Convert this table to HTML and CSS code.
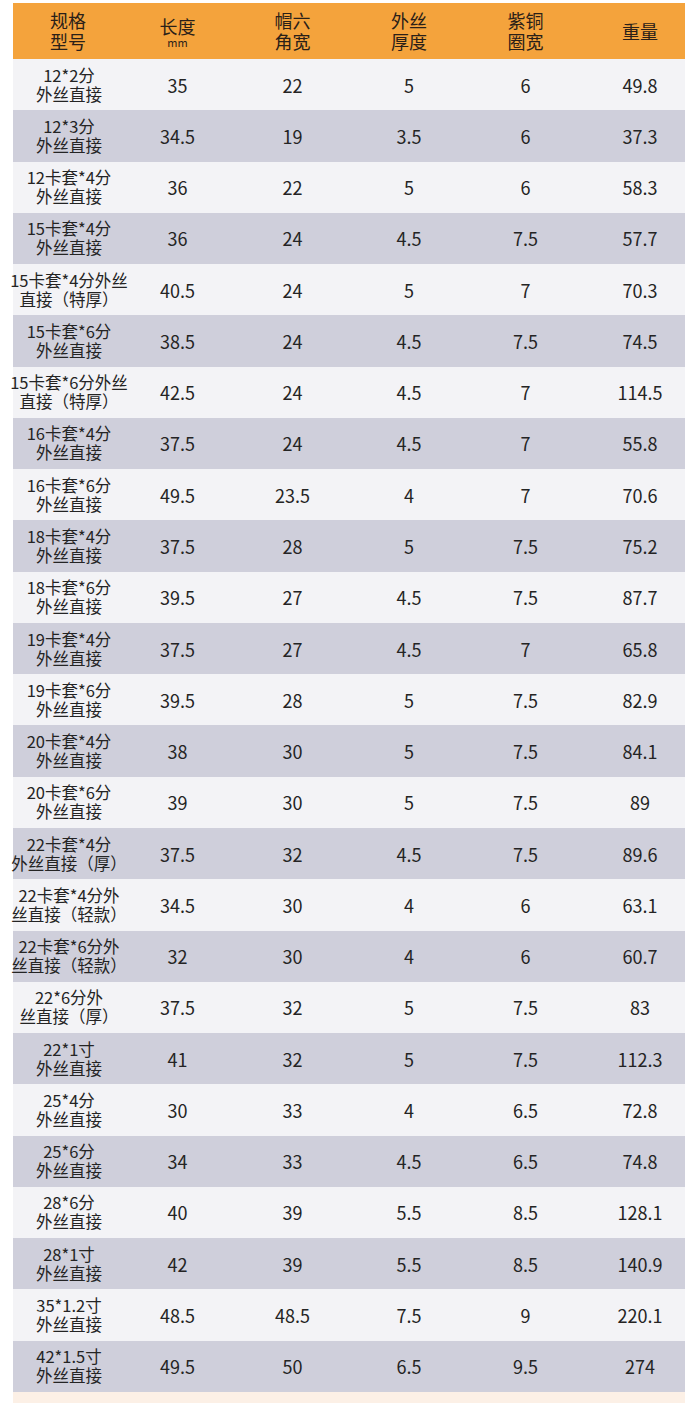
FILE: index.html
```html
<!DOCTYPE html>
<html lang="zh-CN">
<head>
<meta charset="utf-8">
<title>规格表</title>
<link rel="stylesheet" href="styles.css">
</head>
<body>
<div class="sheet">
  <div class="row head">
    <div class="c c1">规格<br>型号</div>
    <div class="c c2"><span class="two">长度<small>mm</small></span></div>
    <div class="c c3">帽六<br>角宽</div>
    <div class="c c4">外丝<br>厚度</div>
    <div class="c c5">紫铜<br>圈宽</div>
    <div class="c c6">重量</div>
  </div>
  <div class="row"><div class="c c1">12*2分<br>外丝直接</div><div class="c c2">35</div><div class="c c3">22</div><div class="c c4">5</div><div class="c c5">6</div><div class="c c6">49.8</div></div>
  <div class="row"><div class="c c1">12*3分<br>外丝直接</div><div class="c c2">34.5</div><div class="c c3">19</div><div class="c c4">3.5</div><div class="c c5">6</div><div class="c c6">37.3</div></div>
  <div class="row"><div class="c c1">12卡套*4分<br>外丝直接</div><div class="c c2">36</div><div class="c c3">22</div><div class="c c4">5</div><div class="c c5">6</div><div class="c c6">58.3</div></div>
  <div class="row"><div class="c c1">15卡套*4分<br>外丝直接</div><div class="c c2">36</div><div class="c c3">24</div><div class="c c4">4.5</div><div class="c c5">7.5</div><div class="c c6">57.7</div></div>
  <div class="row"><div class="c c1">15卡套*4分外丝<br>直接（特厚）</div><div class="c c2">40.5</div><div class="c c3">24</div><div class="c c4">5</div><div class="c c5">7</div><div class="c c6">70.3</div></div>
  <div class="row"><div class="c c1">15卡套*6分<br>外丝直接</div><div class="c c2">38.5</div><div class="c c3">24</div><div class="c c4">4.5</div><div class="c c5">7.5</div><div class="c c6">74.5</div></div>
  <div class="row"><div class="c c1">15卡套*6分外丝<br>直接（特厚）</div><div class="c c2">42.5</div><div class="c c3">24</div><div class="c c4">4.5</div><div class="c c5">7</div><div class="c c6">114.5</div></div>
  <div class="row"><div class="c c1">16卡套*4分<br>外丝直接</div><div class="c c2">37.5</div><div class="c c3">24</div><div class="c c4">4.5</div><div class="c c5">7</div><div class="c c6">55.8</div></div>
  <div class="row"><div class="c c1">16卡套*6分<br>外丝直接</div><div class="c c2">49.5</div><div class="c c3">23.5</div><div class="c c4">4</div><div class="c c5">7</div><div class="c c6">70.6</div></div>
  <div class="row"><div class="c c1">18卡套*4分<br>外丝直接</div><div class="c c2">37.5</div><div class="c c3">28</div><div class="c c4">5</div><div class="c c5">7.5</div><div class="c c6">75.2</div></div>
  <div class="row"><div class="c c1">18卡套*6分<br>外丝直接</div><div class="c c2">39.5</div><div class="c c3">27</div><div class="c c4">4.5</div><div class="c c5">7.5</div><div class="c c6">87.7</div></div>
  <div class="row"><div class="c c1">19卡套*4分<br>外丝直接</div><div class="c c2">37.5</div><div class="c c3">27</div><div class="c c4">4.5</div><div class="c c5">7</div><div class="c c6">65.8</div></div>
  <div class="row"><div class="c c1">19卡套*6分<br>外丝直接</div><div class="c c2">39.5</div><div class="c c3">28</div><div class="c c4">5</div><div class="c c5">7.5</div><div class="c c6">82.9</div></div>
  <div class="row"><div class="c c1">20卡套*4分<br>外丝直接</div><div class="c c2">38</div><div class="c c3">30</div><div class="c c4">5</div><div class="c c5">7.5</div><div class="c c6">84.1</div></div>
  <div class="row"><div class="c c1">20卡套*6分<br>外丝直接</div><div class="c c2">39</div><div class="c c3">30</div><div class="c c4">5</div><div class="c c5">7.5</div><div class="c c6">89</div></div>
  <div class="row"><div class="c c1">22卡套*4分<br>外丝直接（厚）</div><div class="c c2">37.5</div><div class="c c3">32</div><div class="c c4">4.5</div><div class="c c5">7.5</div><div class="c c6">89.6</div></div>
  <div class="row"><div class="c c1">22卡套*4分外<br>丝直接（轻款）</div><div class="c c2">34.5</div><div class="c c3">30</div><div class="c c4">4</div><div class="c c5">6</div><div class="c c6">63.1</div></div>
  <div class="row"><div class="c c1">22卡套*6分外<br>丝直接（轻款）</div><div class="c c2">32</div><div class="c c3">30</div><div class="c c4">4</div><div class="c c5">6</div><div class="c c6">60.7</div></div>
  <div class="row"><div class="c c1">22*6分外<br>丝直接（厚）</div><div class="c c2">37.5</div><div class="c c3">32</div><div class="c c4">5</div><div class="c c5">7.5</div><div class="c c6">83</div></div>
  <div class="row"><div class="c c1">22*1寸<br>外丝直接</div><div class="c c2">41</div><div class="c c3">32</div><div class="c c4">5</div><div class="c c5">7.5</div><div class="c c6">112.3</div></div>
  <div class="row"><div class="c c1">25*4分<br>外丝直接</div><div class="c c2">30</div><div class="c c3">33</div><div class="c c4">4</div><div class="c c5">6.5</div><div class="c c6">72.8</div></div>
  <div class="row"><div class="c c1">25*6分<br>外丝直接</div><div class="c c2">34</div><div class="c c3">33</div><div class="c c4">4.5</div><div class="c c5">6.5</div><div class="c c6">74.8</div></div>
  <div class="row"><div class="c c1">28*6分<br>外丝直接</div><div class="c c2">40</div><div class="c c3">39</div><div class="c c4">5.5</div><div class="c c5">8.5</div><div class="c c6">128.1</div></div>
  <div class="row"><div class="c c1">28*1寸<br>外丝直接</div><div class="c c2">42</div><div class="c c3">39</div><div class="c c4">5.5</div><div class="c c5">8.5</div><div class="c c6">140.9</div></div>
  <div class="row"><div class="c c1">35*1.2寸<br>外丝直接</div><div class="c c2">48.5</div><div class="c c3">48.5</div><div class="c c4">7.5</div><div class="c c5">9</div><div class="c c6">220.1</div></div>
  <div class="row"><div class="c c1">42*1.5寸<br>外丝直接</div><div class="c c2">49.5</div><div class="c c3">50</div><div class="c c4">6.5</div><div class="c c5">9.5</div><div class="c c6">274</div></div>
  <div class="foot"></div>
</div>
</body>
</html>
```

FILE: styles.css
```css
html, body {
  margin: 0;
  padding: 0;
  background: #ffffff;
}
body {
  font-family: "Noto Sans CJK SC", "Noto Sans", sans-serif;
  font-weight: 400;
  color: #242424;
  width: 700px;
}
.sheet {
  margin: 3px 0 0 13px;
  width: 672px;
  display: flex;
  flex-direction: column;
}
.row {
  display: grid;
  grid-template-columns: 108px 113px 117px 116px 117px 101px;
  height: 51.27px;
  background: #f3f3f6;
}
.row:nth-child(odd) {
  background: #cfcfdb;
}
.row.head {
  height: 56px;
  background: #f4a33c;
}
.c {
  display: flex;
  align-items: center;
  justify-content: center;
  text-align: center;
  white-space: nowrap;
  font-size: 18px;
  line-height: 22px;
}
.c1 {
  font-size: 16.5px;
  line-height: 19px;
  padding-left: 4px;
}
.c6 {
  padding-left: 11px;
}
.head .c {
  font-size: 18px;
  line-height: 21px;
  color: #2a2018;
}
.head .c1 {
  padding-left: 2px;
}
.two {
  display: flex;
  flex-direction: column;
  align-items: center;
  line-height: 21px;
  padding-top: 2px;
}
.two small {
  font-size: 11px;
  line-height: 11px;
}
.foot {
  height: 11px;
  background: #fcf0e6;
}
```
